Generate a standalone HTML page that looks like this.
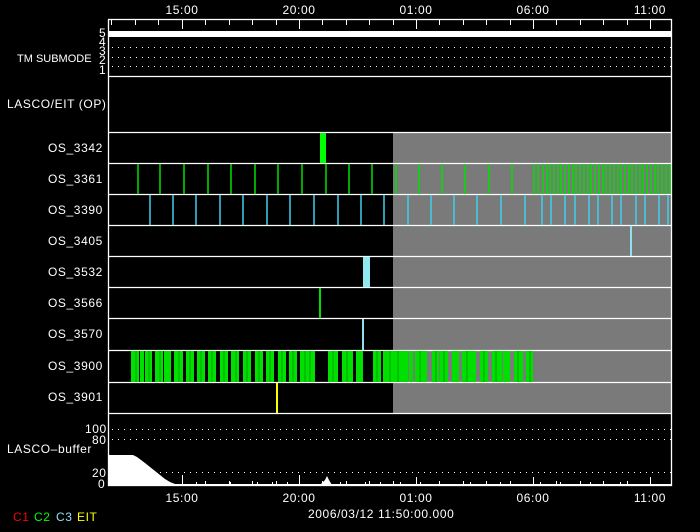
<!DOCTYPE html>
<html><head><meta charset="utf-8"><style>
html,body{margin:0;padding:0;background:#000;}
svg{display:block}
text{font-family:"Liberation Sans",sans-serif;font-size:12px;fill:#fff;letter-spacing:0.6px}
.t{text-anchor:middle}
</style></head><body>
<svg width="700" height="532" viewBox="0 0 700 532" xmlns="http://www.w3.org/2000/svg">
<rect width="700" height="532" fill="#000"/>
<rect x="393" y="132" width="278" height="281" fill="#7a7a7a"/>
<g stroke="#fff" stroke-width="1.3" fill="none">
<rect x="108.5" y="19.5" width="563" height="466"/>
<line x1="108" y1="76.5" x2="671" y2="76.5"/>
<line x1="108" y1="132.5" x2="671" y2="132.5"/>
<line x1="108" y1="163.5" x2="671" y2="163.5"/>
<line x1="108" y1="194.5" x2="671" y2="194.5"/>
<line x1="108" y1="225.5" x2="671" y2="225.5"/>
<line x1="108" y1="256.5" x2="671" y2="256.5"/>
<line x1="108" y1="287.5" x2="671" y2="287.5"/>
<line x1="108" y1="318.5" x2="671" y2="318.5"/>
<line x1="108" y1="350.5" x2="671" y2="350.5"/>
<line x1="108" y1="382.5" x2="671" y2="382.5"/>
<line x1="108" y1="413.5" x2="671" y2="413.5"/>
</g>
<g stroke="#fff" stroke-width="1">
<path d="M111.5 20v5M135.5 20v5M158.5 20v5M182.5 20v9M205.5 20v5M229.5 20v5M252.5 20v5M276.5 20v5M299.5 20v9M322.5 20v5M346.5 20v5M369.5 20v5M393.5 20v5M416.5 20v9M439.5 20v5M463.5 20v5M486.5 20v5M510.5 20v5M533.5 20v9M556.5 20v5M580.5 20v5M603.5 20v5M627.5 20v5M650.5 20v9"/>
<path d="M111.5 485v-4M135.5 485v-4M158.5 485v-4M182.5 485v-8M205.5 485v-4M229.5 485v-4M252.5 485v-4M276.5 485v-4M299.5 485v-8M322.5 485v-4M346.5 485v-4M369.5 485v-4M393.5 485v-4M416.5 485v-8M439.5 485v-4M463.5 485v-4M486.5 485v-4M510.5 485v-4M533.5 485v-8M556.5 485v-4M580.5 485v-4M603.5 485v-4M627.5 485v-4M650.5 485v-8"/>
</g>
<rect x="109" y="31" width="562" height="6" fill="#fff"/>
<g stroke="#fff" stroke-width="1" stroke-dasharray="1 5">
<line x1="112" y1="47.5" x2="671" y2="47.5"/>
<line x1="112" y1="57.5" x2="671" y2="57.5"/>
<line x1="112" y1="66.5" x2="671" y2="66.5"/>
<line x1="112" y1="429.5" x2="671" y2="429.5"/>
<line x1="112" y1="439.5" x2="671" y2="439.5"/>
<line x1="112" y1="472.5" x2="671" y2="472.5"/>
</g>
<rect x="320" y="133" width="6" height="30" fill="#00ff00"/>
<g stroke="#00e000" stroke-width="1.5">
<path d="M138 164v30M160 164v30M184 164v30M208 164v30M231 164v30M255 164v30M278 164v30M302 164v30M326 164v30M349 164v30M372 164v30M396 164v30M419 164v30M442 164v30M465 164v30M489 164v30M512 164v30M534 164v30M538 164v30M543 164v30M547 164v30M550 164v30M554 164v30M558 164v30M561 164v30M565 164v30M569 164v30M573 164v30M576 164v30M580 164v30M584 164v30M588 164v30M591 164v30M595 164v30M599 164v30M603 164v30M606 164v30M610 164v30M614 164v30M618 164v30M621 164v30M625 164v30M629 164v30M632 164v30M636 164v30M640 164v30M643 164v30M647 164v30M651 164v30M655 164v30M658 164v30M662 164v30M666 164v30M670 164v30"/>
</g>
<g stroke="#40d0f0" stroke-width="1.5">
<path d="M150 195v30M173 195v30M196 195v30M220 195v30M243 195v30M267 195v30M290 195v30M314 195v30M338 195v30M361 195v30M384 195v30M408 195v30M431 195v30M454 195v30M477 195v30M501 195v30M525 195v30M542 195v30M551 195v30M565 195v30M575 195v30M589 195v30M598 195v30M612 195v30M621 195v30M636 195v30M645 195v30M659 195v30M668 195v30"/>
</g>
<rect x="630" y="226" width="2" height="30" fill="#90e0f0"/>
<rect x="363" y="257" width="7" height="30" fill="#90e8f0"/>
<rect x="319" y="288" width="2" height="30" fill="#00e000"/>
<rect x="362" y="319" width="2" height="31" fill="#90e0f0"/>
<g fill="#00e000">
<rect x="131" y="351" width="8" height="31"/><rect x="140" y="351" width="4" height="31"/><rect x="145" y="351" width="7" height="31"/>
<rect x="155" y="351" width="8" height="31"/><rect x="164" y="351" width="7" height="31"/><rect x="174" y="351" width="9" height="31"/>
<rect x="186" y="351" width="8" height="31"/><rect x="197" y="351" width="8" height="31"/><rect x="208" y="351" width="8" height="31"/>
<rect x="220" y="351" width="8" height="31"/><rect x="231" y="351" width="8" height="31"/><rect x="243" y="351" width="8" height="31"/>
<rect x="255" y="351" width="8" height="31"/><rect x="266" y="351" width="8" height="31"/><rect x="278" y="351" width="8" height="31"/>
<rect x="289" y="351" width="8" height="31"/><rect x="300" y="351" width="15" height="31"/><rect x="328" y="351" width="10" height="31"/>
<rect x="342" y="351" width="11" height="31"/><rect x="356" y="351" width="7" height="31"/><rect x="373" y="351" width="8" height="31"/>
<rect x="383" y="351" width="25" height="31"/><rect x="409" y="351" width="4" height="31"/><rect x="415" y="351" width="12" height="31"/>
<rect x="432" y="351" width="7" height="31"/><rect x="440" y="351" width="8" height="31"/><rect x="452" y="351" width="7" height="31"/>
<rect x="462" y="351" width="14" height="31"/><rect x="480" y="351" width="8" height="31"/><rect x="492" y="351" width="10" height="31"/>
<rect x="503" y="351" width="7" height="31"/><rect x="514" y="351" width="9" height="31"/><rect x="526" y="351" width="7" height="31"/>
</g>
<g stroke="#00a000" stroke-width="1">
<path d="M136 351v31M149 351v31M160 351v31M179 351v31M190 351v31M201 351v31M212 351v31M224 351v31M236 351v31M247 351v31M259 351v31M270 351v31M282 351v31M293 351v31M305 351v31M310 351v31M333 351v31M347 351v31M377 351v31M390 351v31M398 351v31M420 351v31M436 351v31M444 351v31M467 351v31M484 351v31M496 351v31M518 351v31M530 351v31"/>
</g>
<rect x="276" y="383" width="2" height="30" fill="#ffff00"/>
<path d="M109 485V455H133L137 457L141 460L145 463L150 467L155 471L160 475L165 479L170 482L175 484L671 484V485Z" fill="#fff"/>
<g stroke="#fff" stroke-width="1"><path d="M182.5 485v-10M299.5 485v-10M196.5 485v-3M230.5 485v-3M257.5 485v-3M272.5 485v-3M287.5 485v-3M340.5 485v-3M365.5 485v-3M380.5 485v-3M400.5 485v-3M420.5 485v-3M470.5 485v-3M500.5 485v-3M540.5 485v-3M560.5 485v-3M590.5 485v-3M620.5 485v-3M650.5 485v-3"/></g>
<path d="M320 485L325 480L327 476L329 480L332 485Z" fill="#fff"/>
<text class="t" x="182" y="14">15:00</text><text class="t" x="299" y="14">20:00</text><text class="t" x="416" y="14">01:00</text><text class="t" x="533" y="14">06:00</text><text class="t" x="650" y="14">11:00</text>
<text class="t" x="182" y="502">15:00</text><text class="t" x="299" y="502">20:00</text><text class="t" x="416" y="502">01:00</text><text class="t" x="533" y="502">06:00</text><text class="t" x="650" y="502">11:00</text>
<text x="17" y="62" style="letter-spacing:0;font-size:11px">TM SUBMODE</text>
<text x="99" y="37" font-size="9">5</text><text x="99" y="46" font-size="9">4</text><text x="99" y="55" font-size="9">3</text><text x="99" y="64" font-size="9">2</text><text x="99" y="74" font-size="9">1</text>
<text x="7" y="108">LASCO/EIT (OP)</text>
<text x="48" y="152">OS_3342</text><text x="48" y="183">OS_3361</text><text x="48" y="214">OS_3390</text><text x="48" y="245">OS_3405</text><text x="48" y="276">OS_3532</text><text x="48" y="307">OS_3566</text><text x="48" y="338">OS_3570</text><text x="48" y="370">OS_3900</text><text x="48" y="401">OS_3901</text>
<text x="85" y="433">100</text><text x="92" y="444">80</text><text x="7" y="453">LASCO–buffer</text><text x="92" y="477">20</text><text x="98" y="488">0</text>
<text x="308" y="518">2006/03/12 11:50:00.000</text>
<text x="13" y="521" font-size="10" style="fill:#ff0000">C1</text><text x="34" y="521" font-size="10" style="fill:#00ff00">C2</text><text x="56" y="521" font-size="10" style="fill:#90e0f0">C3</text><text x="77" y="521" font-size="10" style="fill:#ffff00">EIT</text>
</svg>
</body></html>
